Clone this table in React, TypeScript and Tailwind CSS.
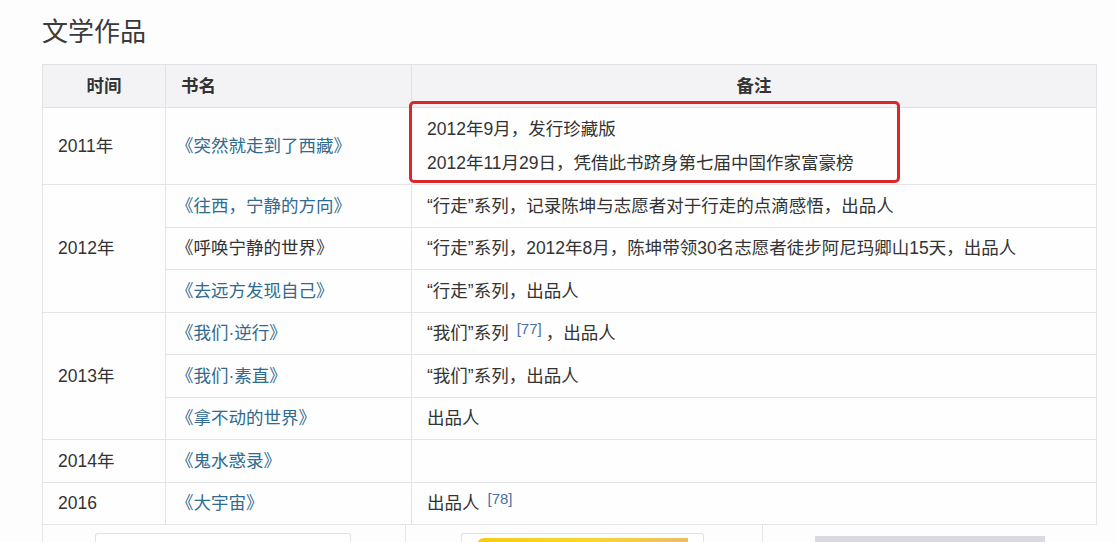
import React from "react";

type Row = {
  year?: string;
  span?: number;
  book: string;
  link?: boolean;
  note?: React.ReactNode;
};

const Ref = ({ n }: { n: number }) => (
  <sup className="relative -top-[5px] ml-[8px] mr-[4px] text-[15px] text-[#4a70a6]">[{n}]</sup>
);

const rows: Row[] = [
  { year: "2012年", span: 3, book: "《往西，宁静的方向》", link: true, note: "“行走”系列，记录陈坤与志愿者对于行走的点滴感悟，出品人" },
  { book: "《呼唤宁静的世界》", note: "“行走”系列，2012年8月，陈坤带领30名志愿者徒步阿尼玛卿山15天，出品人" },
  { book: "《去远方发现自己》", link: true, note: "“行走”系列，出品人" },
  {
    year: "2013年",
    span: 3,
    book: "《我们·逆行》",
    link: true,
    note: (
      <>
        “我们”系列<Ref n={77} />，出品人
      </>
    ),
  },
  { book: "《我们·素直》", link: true, note: "“我们”系列，出品人" },
  { book: "《拿不动的世界》", link: true, note: "出品人" },
  { year: "2014年", span: 1, book: "《鬼水惑录》", link: true, note: "" },
  {
    year: "2016",
    span: 1,
    book: "《大宇宙》",
    link: true,
    note: (
      <>
        出品人<Ref n={78} />
      </>
    ),
  },
];

export default function App() {
  return (
    <div
      className="h-[542px] w-[1116px] overflow-hidden bg-[#fdfdfd] text-[#333]"
      style={{ fontFamily: '"Liberation Sans", "Noto Sans CJK SC", sans-serif' }}
    >
      <h2 className="pl-[42px] pt-[15px] text-[26px] leading-[34px] text-[#3a3a3a]">文学作品</h2>

      <div className="relative ml-[42px] mt-[15px] w-[1055px]">
        <table className="w-full table-fixed border-collapse text-[17.5px]">
          <colgroup>
            <col className="w-[123px]" />
            <col className="w-[246px]" />
            <col />
          </colgroup>
          <thead>
            <tr className="h-[43px] bg-[#f3f3f5]">
              <th className="border border-[#e2e2e4] font-bold text-[#333]">时间</th>
              <th className="border border-[#e2e2e4] pl-[15px] text-left font-bold text-[#333]">书名</th>
              <th className="border border-[#e2e2e4] font-bold text-[#333]">备注</th>
            </tr>
          </thead>
          <tbody className="bg-[#fefefe]">
            <tr className="h-[77px]">
              <td className="border border-[#e4e4e6] pl-[15px]">2011年</td>
              <td className="border border-[#e4e4e6] pl-[10px] text-[#2f6b8e]">《突然就走到了西藏》</td>
              <td className="border border-[#e4e4e6] pl-[15px] leading-[34px]">
                <div>2012年9月，发行珍藏版</div>
                <div>2012年11月29日，凭借此书跻身第七届中国作家富豪榜</div>
              </td>
            </tr>
            {rows.map((r, i) => (
              <tr key={i} className="h-[42.5px]">
                {r.year && (
                  <td rowSpan={r.span} className="border border-[#e4e4e6] pl-[15px]">
                    {r.year}
                  </td>
                )}
                <td className={`border border-[#e4e4e6] pl-[10px] ${r.link ? "text-[#2f6b8e]" : "text-[#333]"}`}>
                  {r.book}
                </td>
                <td className="border border-[#e4e4e6] pl-[15px]">{r.note}</td>
              </tr>
            ))}
          </tbody>
        </table>

        <div className="pointer-events-none absolute left-[367px] top-[37px] h-[82px] w-[491px] rounded-[5px] border-[3px] border-[#d9272b]" />

        <div className="flex h-[20px] border-l border-[#e4e4e6]">
          <div className="flex w-[362px] items-end pl-[52px]">
            <div className="h-[12px] w-[256px] rounded-t-[3px] border border-b-0 border-[#e2e2e2] bg-white" />
          </div>
          <div className="flex w-[357px] items-end border-l border-[#e4e4e6] pl-[55px]">
            <div className="flex h-[12px] w-[243px] items-end rounded-t-[3px] border border-b-0 border-[#e2e2e2] bg-white px-[15px]">
              <div className="h-[7px] w-full rounded-tl-[10px] bg-gradient-to-r from-[#f4cc10] via-[#f6d82a] to-[#e8c060]" />
            </div>
          </div>
          <div className="flex flex-1 items-end border-l border-[#e4e4e6] pl-[52px]">
            <div className="h-[9px] w-[230px] bg-[#d9d9df]" />
          </div>
        </div>
      </div>
    </div>
  );
}
